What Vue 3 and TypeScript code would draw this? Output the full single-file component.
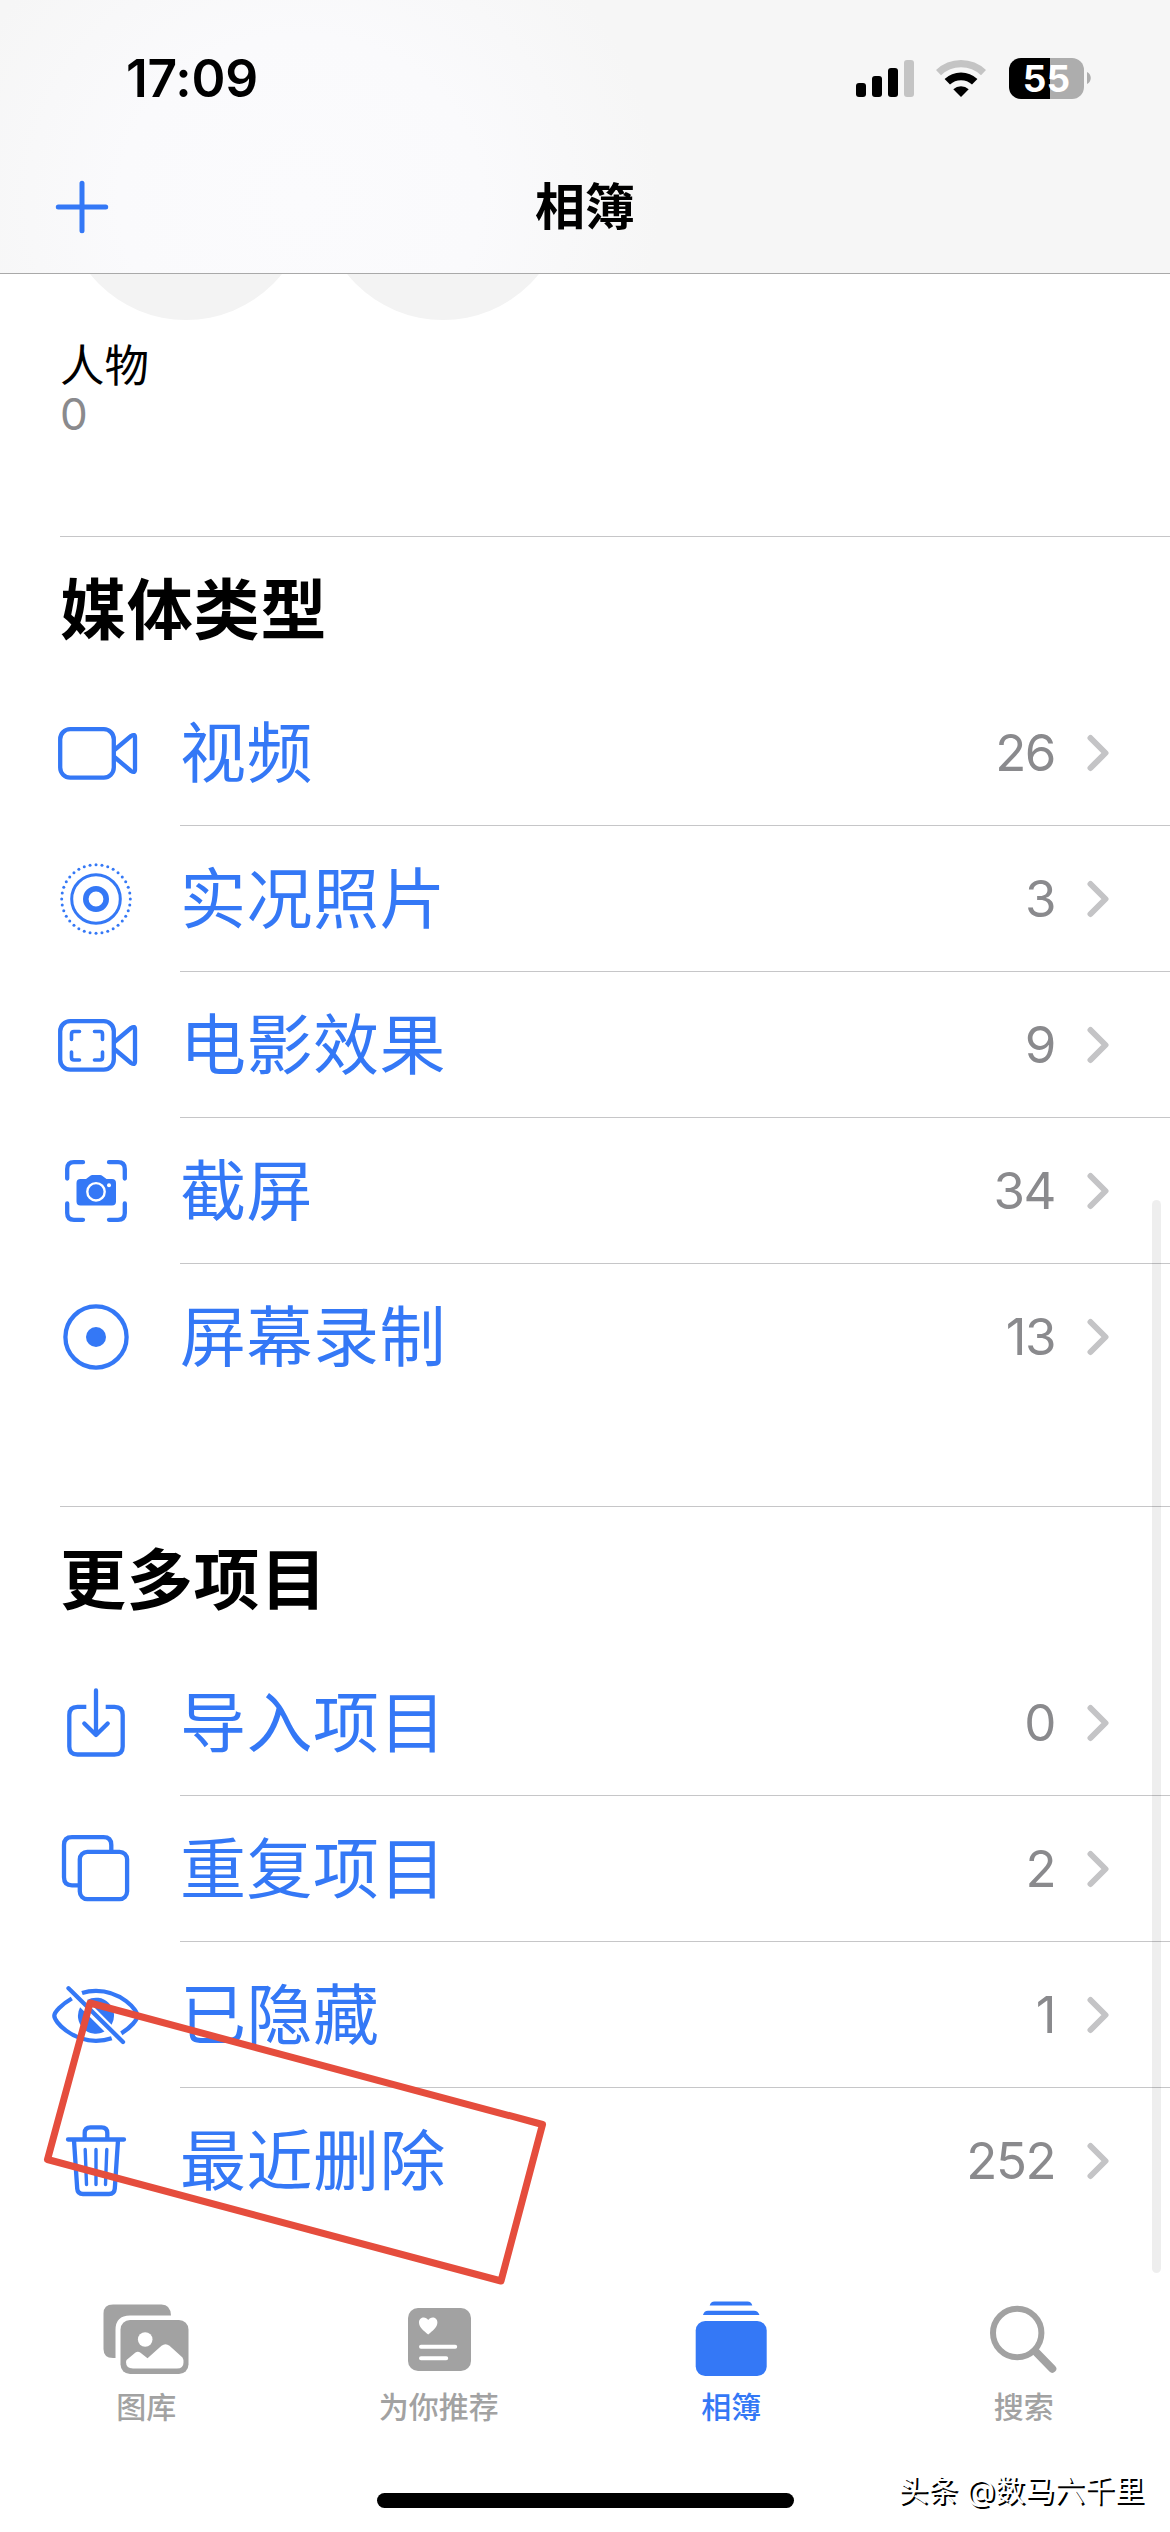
<script setup lang="ts">
type IconName =
  | 'video' | 'live' | 'cinematic' | 'screenshot' | 'record'
  | 'import' | 'duplicate' | 'hidden' | 'trash'

interface AlbumRow {
  icon: IconName
  label: string
  count: number
}

interface AlbumSection {
  title: string
  rows: AlbumRow[]
}

const sections: AlbumSection[] = [
  {
    title: '媒体类型',
    rows: [
      { icon: 'video', label: '视频', count: 26 },
      { icon: 'live', label: '实况照片', count: 3 },
      { icon: 'cinematic', label: '电影效果', count: 9 },
      { icon: 'screenshot', label: '截屏', count: 34 },
      { icon: 'record', label: '屏幕录制', count: 13 },
    ],
  },
  {
    title: '更多项目',
    rows: [
      { icon: 'import', label: '导入项目', count: 0 },
      { icon: 'duplicate', label: '重复项目', count: 2 },
      { icon: 'hidden', label: '已隐藏', count: 1 },
      { icon: 'trash', label: '最近删除', count: 252 },
    ],
  },
]

const tabs = [
  { id: 'library', label: '图库' },
  { id: 'foryou', label: '为你推荐' },
  { id: 'albums', label: '相簿' },
  { id: 'search', label: '搜索' },
]
const activeTab = 'albums'

// Evenly spaced dots for the outer ring of the live photo icon
const liveDots = Array.from({ length: 36 }, (_, i) => {
  const a = (i * Math.PI) / 18
  return { x: 48 + 34.3 * Math.sin(a), y: 48 - 34.3 * Math.cos(a) }
})
</script>

<template>
  <div class="screen">
    <header class="top">
      <div class="status">
        <span class="time">17:09</span>
        <div class="indicators">
          <svg class="signal" width="58" height="37" viewBox="0 0 58 37">
            <rect x="0" y="23" width="10" height="14" rx="3" />
            <rect x="16" y="16" width="10" height="21" rx="3" />
            <rect x="32" y="8" width="10" height="29" rx="3" />
            <rect x="48" y="0" width="10" height="37" rx="3" fill="#c4c4c4" />
          </svg>
          <svg class="wifi" width="50" height="37" viewBox="0 0 50 37">
            <path d="M2.500 12.700A32.500 32.500 0 0 1 47.500 12.700" fill="none" stroke="#c4c4c4" stroke-width="7.200" />
            <path d="M11.300 21.800A19.800 19.800 0 0 1 38.700 21.800" fill="none" stroke="#000" stroke-width="7.800" />
            <path d="M25 37L17.300 29.200A11.500 11.500 0 0 1 32.700 29.200Z" />
          </svg>
          <div class="battery">
            <div class="cell"><span>55</span></div>
            <svg width="4" height="12" viewBox="0 0 4 12"><path d="M0 0C5 2 5 10 0 12Z" fill="#adadad" /></svg>
          </div>
        </div>
      </div>
      <div class="nav">
        <svg class="plus" width="54" height="54" viewBox="0 0 54 54">
          <path d="M27 3.300V50.700M3.300 27H50.700" />
        </svg>
        <h1>相簿</h1>
      </div>
    </header>

    <main>
      <section class="people">
        <div class="faces"><i></i><i></i></div>
        <p class="name">人物</p>
        <p class="num">0</p>
      </section>

      <section v-for="s in sections" :key="s.title" class="group">
        <h2>{{ s.title }}</h2>
        <ul>
          <li v-for="r in s.rows" :key="r.label">
            <svg class="icon" width="96" height="96" viewBox="0 0 96 96">
              <g v-if="r.icon === 'video' || r.icon === 'cinematic'">
                <rect x="12.200" y="24.200" width="53.600" height="48.400" rx="10" />
                <path d="M67 44.500L83 31Q87 28.500 87 32.500V64.500Q87 68.500 83 66L67 52.500" />
                <path
                  v-if="r.icon === 'cinematic'"
                  stroke-width="3.6"
                  d="M23.500 42.500V37Q23.500 34.500 26 34.500H31.500M46.500 34.500H52Q54.500 34.500 54.500 37V42.500M54.500 55V60.500Q54.500 63 52 63H46.500M31.500 63H26Q23.500 63 23.500 60.500V55"
                />
              </g>
              <g v-else-if="r.icon === 'live'">
                <circle cx="48" cy="48" r="24.300" stroke-width="3" />
                <circle cx="48" cy="48" r="10.200" stroke-width="5.600" />
                <circle v-for="(d, i) in liveDots" :key="i" class="solid" :cx="d.x" :cy="d.y" r="1.500" />
              </g>
              <g v-else-if="r.icon === 'screenshot'">
                <path d="M19.200 35.500V26Q19.200 19.200 26 19.200H35M61 19.200H70Q76.800 19.200 76.800 26V35.500M76.800 60.500V70Q76.800 76.800 70 76.800H61M35 76.800H26Q19.200 76.800 19.200 70V60.500" />
                <path class="solid" d="M32.500 36H38L42 33Q43 32 44.500 32H52Q53.500 32 54.500 33L58.500 36H64Q68 36 68 40V58.500Q68 62.500 64 62.500H32.500Q28.500 62.500 28.500 58.500V40Q28.500 36 32.500 36Z" />
                <circle cx="48" cy="48.800" r="8.700" stroke="#fff" stroke-width="2.400" />
                <circle cx="61" cy="42.200" r="2" fill="#fff" stroke="none" />
              </g>
              <g v-else-if="r.icon === 'record'">
                <circle cx="48" cy="48" r="30.600" />
                <circle class="solid" cx="48" cy="48" r="10" />
              </g>
              <g v-else-if="r.icon === 'import'">
                <path stroke-linecap="butt" d="M38.300 31.800H29.500Q21.300 31.800 21.300 40V71.500Q21.300 79.500 29.500 79.500H66.500Q74.700 79.500 74.700 71.500V40Q74.700 31.800 66.500 31.800H57.700" />
                <path d="M48 15.500V59.500M36.300 48.500L48 60L59.700 48.500" />
              </g>
              <g v-else-if="r.icon === 'duplicate'">
                <path stroke-linecap="butt" d="M31.500 64.300H24Q16 64.300 16 56.300V24Q16 16.200 24 16.200H55.500Q63.300 16.200 63.300 24V30.800" />
                <rect x="31.800" y="30.800" width="47.300" height="47.300" rx="7.500" />
              </g>
              <g v-else-if="r.icon === 'hidden'">
                <path stroke-linecap="butt" d="M34 26Q40.500 23.800 48 23.800C73 23.800 89.500 43 89.500 48.800C89.500 52.500 83 60.500 73.300 66.300M63.700 71.300Q56.500 73.800 48 73.800C24 73.800 6.300 55 6.300 48.800C6.300 45 13.500 37.500 23.800 31.500" />
                <path class="solid" d="M39 33.100A18 18 0 0 1 63.600 57.700ZM32.100 40.200A18 18 0 0 0 56.500 64.600Z" />
                <path d="M20.500 21.200L75 75" />
              </g>
              <g v-else>
                <path d="M20 26.500H76M36.700 25.500V20Q36.700 14.300 42.500 14.300H53.500Q59.300 14.300 59.300 20V25.500M26 27.500L29.200 75.500Q29.600 81 35 81H61Q66.400 81 66.800 75.500L70 27.500" />
                <path stroke-width="3.400" d="M37.200 36.500L38.500 71.500M48 36.500V71.500M58.800 36.500L57.500 71.500" />
              </g>
            </svg>
            <div class="line">
              <span class="label">{{ r.label }}</span>
              <span class="count">{{ r.count }}</span>
              <svg class="chevron" width="22" height="38" viewBox="0 0 22 38">
                <path d="M3.500 4L18.500 19L3.500 34" />
              </svg>
            </div>
          </li>
        </ul>
      </section>
    </main>

    <nav class="tabs">
      <div v-for="t in tabs" :key="t.id" class="tab" :class="{ active: t.id === activeTab }">
        <svg width="90" height="80" viewBox="0 0 90 80">
          <g v-if="t.id === 'library'">
            <path d="M12 4.500H60.500Q69.500 4.500 70 15.500H29Q14.500 15.500 14.500 30V58H12Q2.500 58 2.500 49V13.500Q2.500 4.500 12 4.500Z" />
            <rect x="19.500" y="20" width="68" height="54" rx="9.500" />
            <circle cx="44.200" cy="39.500" r="7.300" fill="#fff" />
            <path fill="#fff" d="M25.500 60L34.500 52.500Q37 50.800 39.500 52.800L46.500 58.300L60.500 45.800Q64.500 42.500 68.500 45.800L81.500 57.500Q82.500 59 82.500 62.500Q82.500 68.500 76 68.500H32Q25 68.500 25 62Z" />
          </g>
          <g v-else-if="t.id === 'foryou'">
            <rect x="14" y="8" width="63" height="63" rx="10" />
            <path fill="#fff" d="M34.200 34.500C30 31 25 27.500 25 22.500C25 16.500 32 16 34.200 20C36.400 16 43.400 16.500 43.400 22.500C43.400 27.500 38.400 31 34.200 34.500Z" />
            <path fill="none" stroke="#fff" stroke-width="4" stroke-linecap="round" d="M27 46.700H61.200M27 58.300H52.200" />
          </g>
          <g v-else-if="t.id === 'albums'">
            <path d="M23.700 5.500Q24.700 1.500 28.500 1.500H61.500Q65.300 1.500 66.300 5.500ZM17 15Q18 10.700 22 10.700H68Q72 10.700 73.500 15Z" />
            <rect x="9.700" y="21" width="71" height="55" rx="9.500" />
          </g>
          <g v-else fill="none" stroke="#a2a2a2">
            <circle cx="38.200" cy="33" r="24.200" stroke-width="6" />
            <path stroke-width="8" stroke-linecap="round" d="M56.500 51.500L73.300 68.700" />
          </g>
        </svg>
        <span>{{ t.label }}</span>
      </div>
    </nav>
    <div class="home"></div>
    <div class="scrollbar"></div>
    <svg class="markup" width="1170" height="2532" viewBox="0 0 1170 2532">
      <path d="M90 2003L542.500 2124.500L501 2281L47.500 2159.500Z" />
    </svg>
    <div class="credit">头条 @数马六千里</div>
  </div>
</template>

<style>
body {
  margin: 0;
  background: #fff;
}
</style>

<style scoped>
.screen {
  position: relative;
  width: 1170px;
  height: 2532px;
  overflow: hidden;
  display: flex;
  flex-direction: column;
  background: #fff;
  color: #000;
  font-family: Inter, 'Noto Sans CJK SC', sans-serif;
}
h1, h2, p, ul { margin: 0; padding: 0; }
svg { display: block; flex: none; }

.top {
  box-sizing: border-box;
  height: 274px;
  flex: none;
  border-bottom: 1px solid #a9a9a9;
  background: radial-gradient(ellipse 360px 330px at 300px 200px, #fbfbfd 0, #fafafc 50%, #f6f6f6 100%);
}
.status {
  box-sizing: border-box;
  height: 156px;
  padding: 0 79px 0 126px;
  display: flex;
  justify-content: space-between;
  align-items: center;
}
.time {
  font-size: 51.5px;
  font-weight: 600;
  line-height: 60px;
  letter-spacing: -0.2px;
}
.indicators { display: flex; align-items: center; }
.wifi { margin: 0 23px 0 22px; }
.battery { display: flex; align-items: center; gap: 3px; }
.cell {
  width: 75px;
  height: 41px;
  border-radius: 12px;
  background: linear-gradient(90deg, #000 41px, #adadad 41px);
  color: #fff;
  font-size: 37px;
  font-weight: 700;
  line-height: 41px;
  text-align: center;
}
.nav {
  height: 102px;
  display: grid;
  grid-template-columns: 1fr auto 1fr;
  align-items: center;
}
.plus { margin-left: 55px; fill: none; stroke: #3478f6; stroke-width: 5; stroke-linecap: round; }
h1 { font-size: 50px; font-weight: 600; line-height: 60px; }

.people { height: 262px; padding-left: 60px; }
.faces { height: 46px; padding-left: 3px; display: flex; align-items: flex-end; gap: 11px; overflow: hidden; }
.faces i { width: 246px; height: 246px; flex: none; border-radius: 50%; background: #f3f3f3; }
.name { margin-top: 22px; font-size: 44.5px; line-height: 48px; }
.num { font-size: 44px; line-height: 48px; color: #8a8a8d; }

.group { margin-bottom: 96px; }
h2 {
  box-sizing: border-box;
  height: 144px;
  margin-left: 60px;
  border-top: 1px solid #c6c6c8;
  font-size: 66px;
  font-weight: 600;
  line-height: 147px;
  letter-spacing: 0.8px;
}
ul { list-style: none; }
li { height: 146px; display: flex; align-items: center; padding-left: 48px; }
.icon { fill: none; stroke: #3478f6; stroke-width: 4.3; stroke-linecap: round; stroke-linejoin: round; }
.solid { fill: #3478f6; stroke: none; }
.line {
  box-sizing: border-box;
  height: 146px;
  flex: 1;
  margin-left: 36px;
  padding: 1px 61px 0 0;
  display: flex;
  align-items: center;
  border-bottom: 1px solid #c6c6c8;
}
li:last-child .line { border-bottom-color: transparent; }
.label { flex: 1; font-size: 66px; line-height: 96px; color: #3478f6; letter-spacing: 0.5px; }
.count { font-size: 51px; line-height: 60px; color: #8a8a8d; letter-spacing: -1.5px; }
.chevron { margin-left: 32px; fill: none; stroke: #c4c4c6; stroke-width: 6; stroke-linecap: round; stroke-linejoin: round; }

.tabs {
  position: absolute;
  left: 0;
  right: 0;
  top: 2300px;
  display: flex;
}
.tab {
  flex: 1;
  display: flex;
  flex-direction: column;
  align-items: center;
  color: #a2a2a2;
  fill: #a2a2a2;
  font-size: 30px;
  font-weight: 500;
  line-height: 40px;
}
.tab span { margin-top: 7px; }
.tab.active { color: #3478f6; fill: #3478f6; }
.home {
  position: absolute;
  left: 377px;
  top: 2493px;
  width: 417px;
  height: 15px;
  border-radius: 8px;
  background: #000;
}
.scrollbar {
  position: absolute;
  left: 1152px;
  top: 1200px;
  width: 9px;
  height: 1073px;
  border-radius: 5px;
  background: rgba(0, 0, 0, 0.067);
}
.markup {
  position: absolute;
  left: 0;
  top: 0;
  fill: none;
  stroke: #e54d3d;
  stroke-width: 7;
  stroke-linejoin: round;
}
.credit {
  position: absolute;
  right: 26px;
  top: 2469px;
  font-size: 29.8px;
  line-height: 42px;
  color: #fff;
  text-shadow: 2px 2px 0 #000;
  white-space: nowrap;
}
</style>
